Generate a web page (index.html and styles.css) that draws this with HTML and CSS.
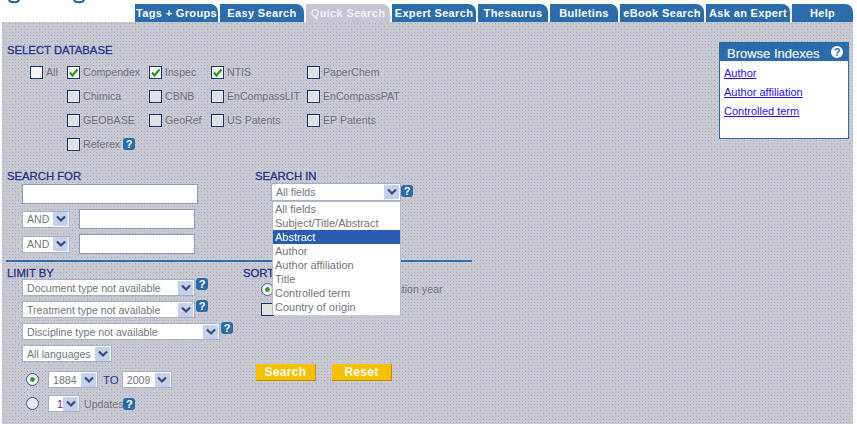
FILE: index.html
```html
<!DOCTYPE html>
<html lang="en">
<head>
  <meta charset="UTF-8">
  <title>Quick Search</title>
  <link rel="stylesheet" href="styles.css">
</head>
<body>
  <svg class="defs" width="0" height="0">
    <symbol id="chev" viewBox="0 0 10 8"><path d="M1 1.5 5 5.5 9 1.5" fill="none" stroke="#3a4a78" stroke-width="2.2"/></symbol>
    <symbol id="tick" viewBox="0 0 11 11"><path d="M2 5.5 4.5 8.5 9.5 2.5" fill="none" stroke="#2a9a20" stroke-width="2.2"/></symbol>
  </svg>

  <div class="page">
    <div class="header">
      <svg class="logo" width="90" height="4" viewBox="0 0 90 4"><path d="M9 0C10 3 18 3 19 0M74 0C75 3 83 3 84 0" fill="none" stroke="#1a5a9c" stroke-width="2"/></svg>
      <div class="tabs">
        <a class="tab w83">Tags + Groups</a>
        <a class="tab w84">Easy Search</a>
        <a class="tab w84 active">Quick Search</a>
        <a class="tab w84">Expert Search</a>
        <a class="tab w70">Thesaurus</a>
        <a class="tab w68">Bulletins</a>
        <a class="tab w84">eBook Search</a>
        <a class="tab w84">Ask an Expert</a>
        <a class="tab w61">Help</a>
      </div>
    </div>

    <div class="panel">
      <div class="content">
        <h3 class="heading">SELECT DATABASE</h3>
        <div class="databases">
          <label class="db"><i class="box white"></i>All</label>
          <label class="db"><i class="box white"><svg width="11" height="11"><use href="#tick"/></svg></i>Compendex</label>
          <label class="db"><i class="box white"><svg width="11" height="11"><use href="#tick"/></svg></i>Inspec</label>
          <label class="db"><i class="box white"><svg width="11" height="11"><use href="#tick"/></svg></i>NTIS</label>
          <label class="db"><i class="box"></i>PaperChem</label>

          <span></span>
          <label class="db"><i class="box"></i>Chimica</label>
          <label class="db"><i class="box"></i>CBNB</label>
          <label class="db"><i class="box"></i>EnCompassLIT</label>
          <label class="db"><i class="box"></i>EnCompassPAT</label>

          <span></span>
          <label class="db"><i class="box"></i>GEOBASE</label>
          <label class="db"><i class="box"></i>GeoRef</label>
          <label class="db"><i class="box"></i>US Patents</label>
          <label class="db"><i class="box"></i>EP Patents</label>

          <span></span>
          <label class="db"><i class="box"></i>Referex <b class="help">?</b></label>
        </div>

        <div class="columns search-cols">
          <div>
            <h3 class="heading">SEARCH FOR</h3>
            <div class="term-first"><div class="field w176"></div></div>
            <div class="term-row">
              <div class="select w48"><span>AND</span><b class="arrow"><svg width="10" height="8"><use href="#chev"/></svg></b></div>
              <div class="field w116"></div>
            </div>
            <div class="term-row">
              <div class="select w48"><span>AND</span><b class="arrow"><svg width="10" height="8"><use href="#chev"/></svg></b></div>
              <div class="field w116"></div>
            </div>
          </div>
          <div class="search-in">
            <h3 class="heading">SEARCH IN</h3>
            <div class="in-row">
              <div class="select open w130"><span>All fields</span><b class="arrow"><svg width="10" height="8"><use href="#chev"/></svg></b></div>
              <b class="help">?</b>
              <ul class="menu">
                <li>All fields</li>
                <li>Subject/Title/Abstract</li>
                <li class="on">Abstract</li>
                <li>Author</li>
                <li>Author affiliation</li>
                <li>Title</li>
                <li>Controlled term</li>
                <li>Country of origin</li>
              </ul>
            </div>
          </div>
        </div>

        <hr class="rule">

        <div class="columns limit-cols">
          <div>
            <h3 class="heading">LIMIT BY</h3>
            <div class="limits">
              <div class="limit"><div class="select w173"><span>Document type not available</span><b class="arrow"><svg width="10" height="8"><use href="#chev"/></svg></b></div><b class="help">?</b></div>
              <div class="limit"><div class="select w173"><span>Treatment type not available</span><b class="arrow"><svg width="10" height="8"><use href="#chev"/></svg></b></div><b class="help">?</b></div>
              <div class="limit"><div class="select w198"><span>Discipline type not available</span><b class="arrow"><svg width="10" height="8"><use href="#chev"/></svg></b></div><b class="help">?</b></div>
              <div class="limit"><div class="select w90"><span>All languages</span><b class="arrow"><svg width="10" height="8"><use href="#chev"/></svg></b></div></div>
            </div>
            <div class="years">
              <i class="radio on"></i>
              <div class="select w50"><span>1884</span><b class="arrow"><svg width="10" height="8"><use href="#chev"/></svg></b></div>
              <span class="to">TO</span>
              <div class="select w50"><span>2009</span><b class="arrow"><svg width="10" height="8"><use href="#chev"/></svg></b></div>
            </div>
            <div class="years updates">
              <i class="radio"></i>
              <div class="select w32"><span class="num">1</span><b class="arrow"><svg width="10" height="8"><use href="#chev"/></svg></b></div>
              <span class="upd">Updates</span><b class="help">?</b>
            </div>
          </div>
          <div class="sort">
            <h3 class="heading">SORT BY</h3>
            <div class="sort-row">
              <i class="radio on"></i><span class="sort-a">Relevance</span>
              <i class="radio"></i><span>Publication year</span>
            </div>
            <div class="sort-row stem">
              <i class="box"></i><span>Autostemming off</span><b class="help">?</b>
            </div>
            <div class="buttons">
              <button class="btn">Search</button>
              <button class="btn">Reset</button>
            </div>
          </div>
        </div>
      </div>

      <div class="browse">
        <div class="browse-head">Browse Indexes <b class="help inv">?</b></div>
        <a href="#">Author</a>
        <a href="#">Author affiliation</a>
        <a href="#">Controlled term</a>
      </div>
    </div>
  </div>
</body>
</html>
```

FILE: styles.css
```css
body {
  margin: 0;
  background: #fff;
  font-family: "Liberation Sans", Arial, sans-serif;
  font-size: 10.6px;
  color: #74747c;
}

.defs {
  position: absolute;
}

.page {
  width: 851px;
  margin-left: 2px;
}

.header {
  height: 22px;
  display: flex;
  justify-content: space-between;
  align-items: flex-start;
}

.logo {
  display: block;
  margin-left: -2px;
}

.tabs {
  display: flex;
  gap: 2px;
  margin-top: 4px;
}

.tab {
  box-sizing: border-box;
  height: 18px;
  line-height: 18px;
  text-align: center;
  color: #fff;
  font-weight: bold;
  font-size: 11px;
  letter-spacing: 0.35px;
  white-space: nowrap;
  border-top-right-radius: 8px;
  background-color: #2a6cac;
  background-image: radial-gradient(#20509c 35%, transparent 40%);
  background-size: 2px 2px;
}

.tab.active {
  color: #eeeef6;
  background-color: #c6c6d2;
  background-image: radial-gradient(#b4b4c8 35%, transparent 40%);
}

.w61 { width: 61px; }
.w68 { width: 68px; }
.w70 { width: 70px; }
.w83 { width: 83px; }
.w84 { width: 84px; }

.panel {
  height: 402px;
  display: flex;
  justify-content: space-between;
  align-items: flex-start;
  background-color: #c9c9d2;
  background-image: url("data:image/svg+xml,%3Csvg xmlns='http://www.w3.org/2000/svg' width='6' height='6'%3E%3Crect x='1' y='1' width='1' height='1' fill='%23a2a0c2'/%3E%3Crect x='4' y='4' width='1' height='1' fill='%23a2a0c2'/%3E%3Crect x='4' y='1' width='1' height='1' fill='%23b4bcc4'/%3E%3Crect x='1' y='4' width='1' height='1' fill='%23b4bcc4'/%3E%3C/svg%3E");
  background-size: 6px 6px;
}

.content {
  width: 470px;
  padding: 21px 0 0 5px;
}

.heading {
  margin: 0;
  font-size: 11.3px;
  line-height: 14px;
  font-weight: normal;
  color: #25358f;
  -webkit-text-stroke: 0.3px #25358f;
  white-space: nowrap;
}

/* database checkboxes */
.databases {
  display: grid;
  grid-template-columns: 37px 82px 62px 96px auto;
  grid-auto-rows: 24px;
  margin: 3px 0 0 23px;
}

.db {
  display: flex;
  align-items: center;
  gap: 3px;
  height: 24px;
  white-space: nowrap;
}

.box {
  box-sizing: border-box;
  flex: none;
  display: block;
  width: 13px;
  height: 13px;
  border: 1px solid #1c3a6e;
  background-color: #e2e2e4;
  background-image: radial-gradient(#f8f8f8 35%, transparent 40%);
  background-size: 2px 2px;
}

.box.white {
  background: #f6f6f6;
}

.box svg {
  display: block;
  margin: 0;
}

.help {
  display: inline-block;
  flex: none;
  width: 12px;
  height: 12px;
  border-radius: 3px;
  background: #2a6ca8;
  color: #fff;
  font-size: 11px;
  line-height: 12px;
  text-align: center;
  font-weight: bold;
}

.help.inv {
  background: #fff;
  color: #2a6ca8;
  border-radius: 6px;
}

/* search fields */
.columns {
  display: flex;
}

.search-cols {
  margin-top: 13px;
}

.search-cols > div:first-child {
  width: 248px;
}

.term-first {
  margin: 1px 0 5px 15px;
}

.term-row {
  display: flex;
  align-items: center;
  gap: 9px;
  margin: 0 0 5px 15px;
}

.field {
  box-sizing: border-box;
  height: 20px;
  background: #fff;
  border: 1px solid #8c9cb8;
}

.w176 { width: 176px; }
.w116 { width: 116px; }

.select {
  box-sizing: border-box;
  display: flex;
  justify-content: space-between;
  align-items: center;
  flex: none;
  height: 17px;
  padding: 0 1px 0 4px;
  background: #fff;
  border: 1px solid #a4b0c4;
  white-space: nowrap;
}

.num {
  color: #7a1a8a;
  padding-left: 4px;
}

.arrow {
  display: flex;
  align-items: center;
  justify-content: center;
  width: 15px;
  height: 14px;
  background: #c4d0ec;
}

.arrow svg {
  display: block;
}

.w32 { width: 32px; }
.w48 { width: 48px; }
.w50 { width: 50px; }
.w90 { width: 90px; }
.w130 { width: 130px; }
.w173 { width: 173px; }
.w198 { width: 198px; }

.search-in {
  width: 200px;
}

.in-row {
  position: relative;
  display: flex;
  align-items: flex-start;
  margin: 0 0 0 16px;
}

.select.open {
  height: 18px;
}

.in-row .help {
  margin-top: 2px;
}

/* open dropdown lies over the sort options */
.menu {
  position: absolute;
  z-index: 2;
  left: 1px;
  top: 18px;
  width: 129px;
  height: 114px;
  box-sizing: border-box;
  margin: 0;
  padding: 0;
  list-style: none;
  background: #fff;
  border: 1px solid #b4bcc8;
  border-bottom: 0;
  font-size: 11px;
  line-height: 14px;
}

.menu li {
  padding-left: 2px;
  height: 14px;
  white-space: nowrap;
}

.menu li.on {
  background: #2a5cb0;
  color: #fff;
}

.rule {
  margin: 1px 0 4px -1px;
  width: 466px;
  height: 2px;
  border: 0;
  background: #2a70b0;
}

/* limits */
.limit-cols > div:first-child {
  width: 236px;
}

.limits {
  margin: -1px 0 0 15px;
}

.limit {
  display: flex;
  align-items: flex-start;
  gap: 1px;
  height: 22px;
}

.limit .help {
  margin-top: -1px;
}

.years {
  display: flex;
  align-items: center;
  height: 17px;
  margin: 4px 0 0 19px;
}

.updates {
  margin-top: 7px;
}

.radio {
  box-sizing: border-box;
  display: block;
  flex: none;
  width: 13px;
  height: 13px;
  margin-right: 9px;
  border: 1px solid #3a5a8c;
  border-radius: 50%;
  background: #e8e8e8;
}

.radio.on {
  background: radial-gradient(#2aa030 25%, #f4f4f4 35%);
}

.to {
  color: #25358f;
  font-size: 11.5px;
  margin: 0 3px 0 5px;
}

.upd {
  margin-left: 4px;
}

/* sort */
.sort {
  position: relative;
}

.sort-row {
  display: flex;
  align-items: center;
  height: 14px;
  margin: 2px 0 0 18px;
  white-space: nowrap;
}

.radio + .sort-a {
  margin-right: 30px;
  margin-left: -6px;
}

.sort-row .radio {
  margin-right: 3px;
}

.sort-row.stem {
  margin-top: 6px;
}

.stem .box {
  margin-right: 3px;
}

.stem .help {
  margin-left: 24px;
}

.buttons {
  display: flex;
  gap: 16px;
  margin: 48px 0 0 13px;
}

.btn {
  width: 60px;
  height: 17px;
  padding: 0;
  border: 0;
  border-bottom: 1px solid #b89000;
  border-right: 1px solid #b89000;
  background-color: #f6c000;
  background-image: radial-gradient(#ffd020 35%, transparent 40%);
  background-size: 2px 2px;
  color: #fff;
  font-family: inherit;
  font-size: 12px;
  font-weight: bold;
  letter-spacing: 0.3px;
}

/* browse box */
.browse {
  box-sizing: border-box;
  width: 130px;
  height: 97px;
  margin: 20px 4px 0 0;
  background: #fff;
  border: 1px solid #2a6cac;
}

.browse-head {
  display: flex;
  justify-content: space-between;
  align-items: center;
  box-sizing: border-box;
  height: 18px;
  padding: 2px 5px 0 7px;
  margin-bottom: 3px;
  background-color: #2a6cac;
  color: #eef4fa;
  font-size: 13px;
  -webkit-text-stroke: 0.2px #eef4fa;
}

.browse-head .help {
  margin-top: -3px;
  -webkit-text-stroke: 0;
}

.browse a {
  display: block;
  height: 19px;
  line-height: 19px;
  margin-left: 4px;
  color: #2a10f0;
  font-size: 11px;
}
```
